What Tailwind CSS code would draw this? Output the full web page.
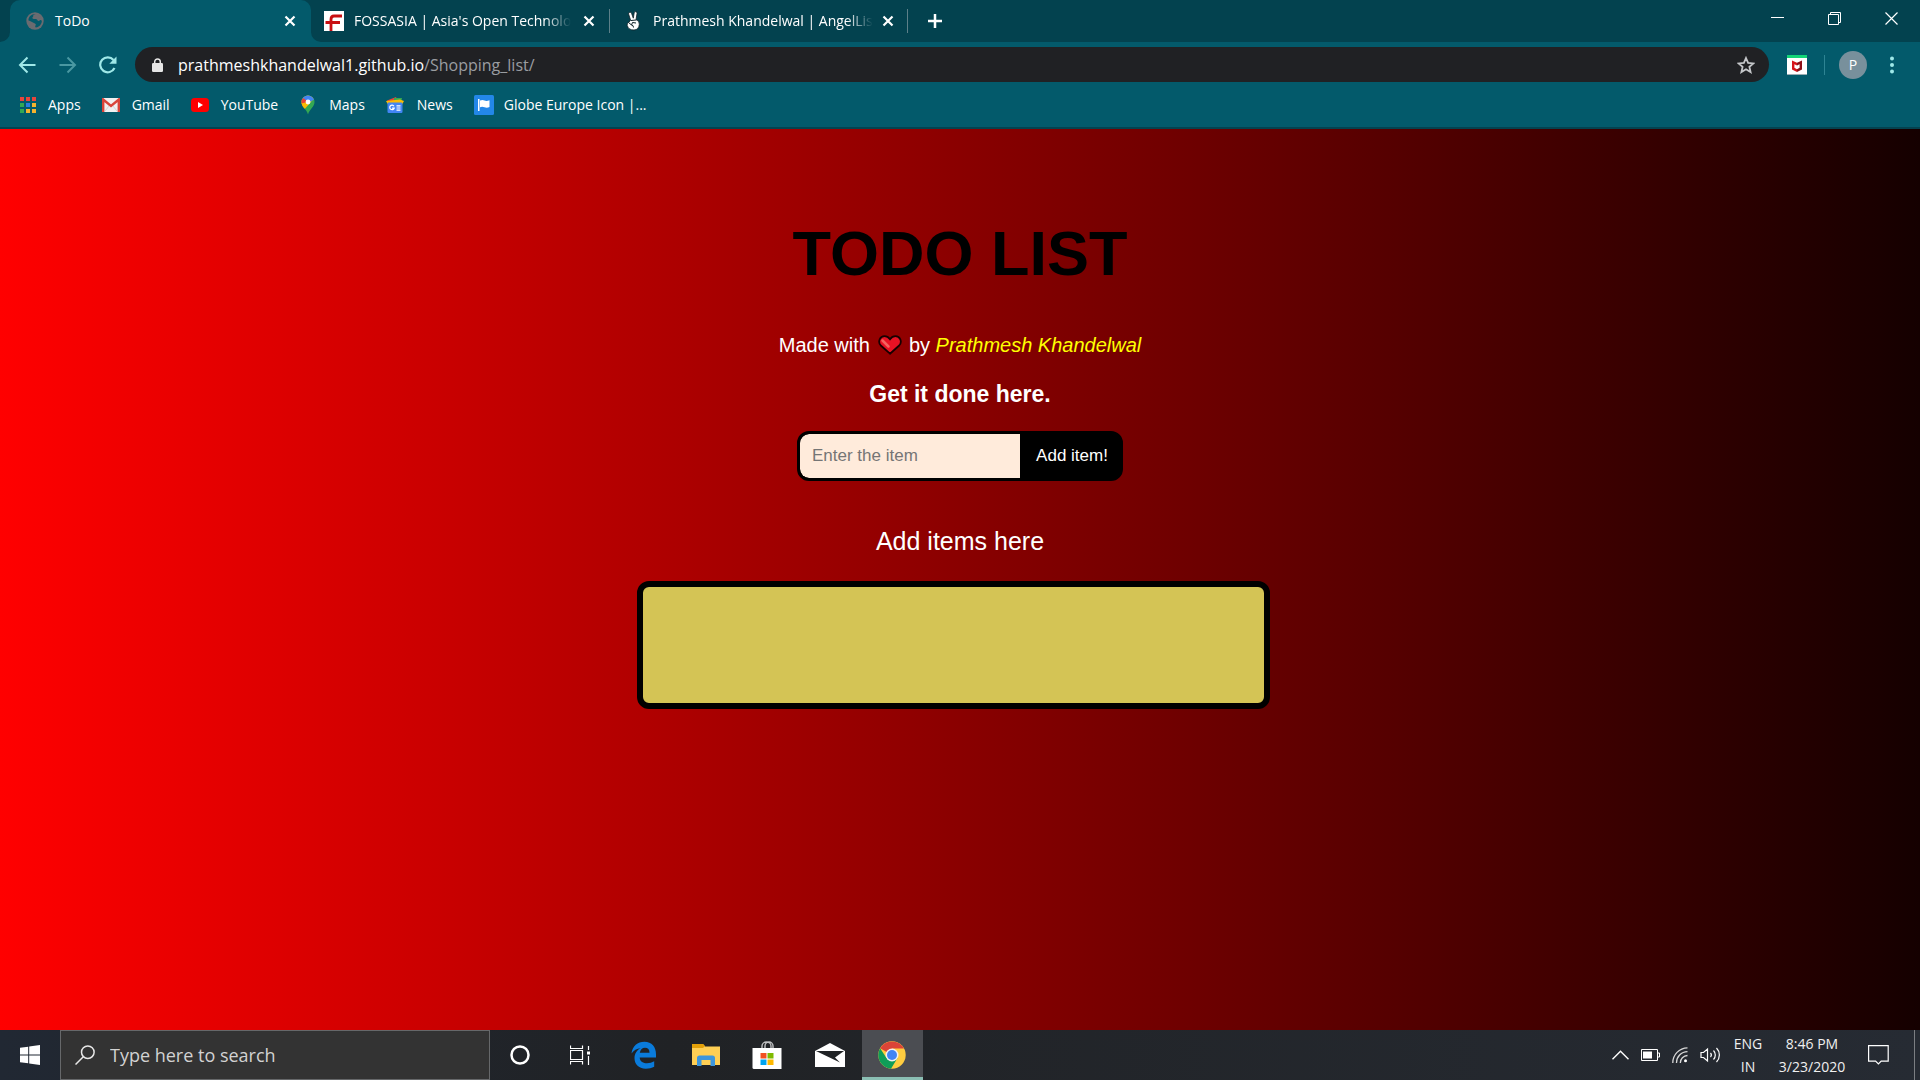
<!DOCTYPE html>
<html lang="en">
<head>
<meta charset="utf-8">
<title>ToDo</title>
<script src="https://cdn.jsdelivr.net/npm/@tailwindcss/browser@4"></script>
</head>
<body class="flex h-screen flex-col overflow-hidden bg-black font-['Segoe_UI','Open_Sans',sans-serif] text-white">

<!-- Browser chrome -->
<header class="shrink-0 border-b-2 border-[#04424f] bg-[#035a6b]">
  <div class="flex h-[42px] bg-[#03424f] pl-[10px] text-sm">
    <div class="relative flex w-[301px] items-center rounded-t-[10px] bg-[#035a6b] pr-[15px] pl-4">
      <svg class="absolute bottom-0 -left-[10px] size-[10px]" viewBox="0 0 10 10"><path d="M10 0v10H0A10 10 0 0 0 10 0z" fill="#035a6b"/></svg>
      <svg class="absolute -right-[10px] bottom-0 size-[10px]" viewBox="0 0 10 10"><path d="M0 0v10h10A10 10 0 0 1 0 0z" fill="#035a6b"/></svg>
      <svg class="size-[18px]" viewBox="0 0 18 18"><circle cx="9" cy="9" r="8.7" fill="#6a6b70"/><path d="M9.500 2c-1.500.5-2.500 1-2.300 2.300.1.900-1 .7-.8 1.800.2 1.200 2.300.8 3.600 1 1.600.2 1.200 1.900 2.600 1.900 1 0 .8-1.200 2-1.100.9.100 1.300.5 1.200 1.600-.4 3.500-3.200 5.500-5.800 6.100-.8-.4-1-1.200-.5-2 .6-.9.200-1.500-.5-2-.8-.6-2.200-.9-3.500-1.800-1-.7-2-1.300-3-1.300C2 5.300 5.500 1.800 9.500 2z" fill="#035a6b"/><path d="M9.500 2.500c1 1.200-.5 1.500.3 2.500s3 .3 4 1.500l1-1C13.600 3.500 11.700 2.400 9.500 2.500z" fill="#6a6b70"/></svg>
      <span class="ml-[11px] flex-1">ToDo</span>
      <button aria-label="Close tab"><svg class="size-3" viewBox="0 0 12 12" stroke="#fff" stroke-width="2.200"><path d="M1.500 1.500l9 9M10.500 1.500l-9 9"/></svg></button>
    </div>
    <div class="flex w-[298px] items-center pr-[14px] pl-[13px]">
      <svg class="size-5 shrink-0" viewBox="0 0 20 20"><path d="M0 0h20v20H0z" fill="#fff"/><path d="M18 5H10Q7 5 7 8.500V20M1.500 11.500H16" fill="none" stroke="#c80f12" stroke-width="2.800"/></svg>
      <span class="ml-[10px] mask-r-from-88% whitespace-nowrap">FOSSASIA | Asia's Open Technolo</span>
      <button class="ml-auto" aria-label="Close tab"><svg class="size-3" viewBox="0 0 12 12" stroke="#fff" stroke-width="2.200"><path d="M1.500 1.500l9 9M10.500 1.500l-9 9"/></svg></button>
    </div>
    <div class="my-[9px] w-px bg-[#5d8089]"></div>
    <div class="flex w-[297px] items-center pr-[13px] pl-4">
      <svg class="h-5 w-4 shrink-0" viewBox="0 0 16 20"><path d="M3.500 1.500q1.500-.8 2 .7l1.800 5 .9-5.400q.4-1.500 1.700-1.100 1.500.3 1.100 1.900L10 8.700q3.500.8 3.300 4.500-.4 5.600-5.300 5.800-5.300.2-6.800-4.600-.5-1.800 1.200-2.600l2.200-2.600L2.600 3q-.4-1.200.9-1.500z" fill="#fff" stroke="#102127" stroke-width=".8"/><path d="M2.500 11.500l3 2.500 1-2.500 3.500.5M5 9.500l5-.5M5.500 14q2 0 2 2.500" fill="none" stroke="#102127"/></svg>
      <span class="ml-[11px] mask-r-from-88% whitespace-nowrap">Prathmesh Khandelwal | AngelLis</span>
      <button class="ml-auto" aria-label="Close tab"><svg class="size-3" viewBox="0 0 12 12" stroke="#fff" stroke-width="2.200"><path d="M1.500 1.500l9 9M10.500 1.500l-9 9"/></svg></button>
    </div>
    <div class="my-[9px] w-px bg-[#5d8089]"></div>
    <button class="ml-[19px]" aria-label="New tab"><svg class="size-4" viewBox="0 0 16 16" stroke="#fff" stroke-width="2.500"><path d="M8 1v14M1 8h14"/></svg></button>
    <div class="mr-[22px] mb-[5px] ml-auto flex items-center gap-11">
      <button aria-label="Minimize"><svg class="size-[13px]" viewBox="0 0 13 13"><path d="M0 5h13v1H0z" fill="#fff"/></svg></button>
      <button aria-label="Restore"><svg class="size-[13px]" viewBox="0 0 13 13" fill="none" stroke="#fff"><path d="M.5 2.500h10v10H.5zM2.500 2.500v-2h10v10h-2"/></svg></button>
      <button aria-label="Close"><svg class="size-[13px]" viewBox="0 0 13 13" stroke="#fff" stroke-width="1.200"><path d="M.5.5l12 12M12.500.5l-12 12"/></svg></button>
    </div>
  </div>

  <div class="flex h-[45px] items-center pr-[26px] pl-[18px]">
    <button aria-label="Back"><svg class="size-[18px]" viewBox="0 0 18 18" fill="none" stroke="#9fe8e8" stroke-width="2"><path d="M17.500 9H2M9.500 1.500L2 9l7.500 7.500"/></svg></button>
    <button class="ml-[23px]" aria-label="Forward"><svg class="size-[18px]" viewBox="0 0 18 18" fill="none" stroke="#4a98a2" stroke-width="2"><path d="M.5 9H16M8.500 1.500L16 9l-7.500 7.500"/></svg></button>
    <button class="ml-[22px]" aria-label="Reload"><svg class="size-[18px]" viewBox="0 0 18 18"><path d="M15.500 12A7.500 7.500 0 1 1 14.500 4" fill="none" stroke="#9fe8e8" stroke-width="2.200"/><path d="M17.500.5v7.200h-7.200z" fill="#9fe8e8"/></svg></button>
    <div class="ml-[18px] flex h-[35px] flex-1 items-center rounded-full bg-[#202124] pr-[14px] pl-[17px]">
      <svg class="h-[14px] w-[11px]" viewBox="0 0 11 14"><path d="M2.700 6V3.800a2.800 2.800 0 0 1 5.600 0V6" fill="none" stroke="#e6e6e6" stroke-width="1.500"/><rect y="5" width="11" height="9" rx="1.200" fill="#e6e6e6"/></svg>
      <a href="#" class="ml-[15px] flex-1 text-base leading-6">prathmeshkhandelwal1.github.io<span class="text-[#9a9da1]">/Shopping_list/</span></a>
      <button aria-label="Bookmark this page"><svg class="size-[18px]" viewBox="0 0 18 18" fill="none" stroke="#c4c6c9" stroke-width="1.800"><path d="M9 2l2.100 4.900 5.300.5-4 3.500 1.200 5.200L9 13.300l-4.600 2.800 1.200-5.200-4-3.500 5.300-.5z"/></svg></button>
    </div>
    <button class="ml-[18px]" aria-label="McAfee"><svg class="size-5" viewBox="0 0 20 20"><path d="M0 0h20v20H0z" fill="#fff"/><path d="M0 0h20v3H0z" fill="#12d477"/><path d="M0 19h20v1H0z" fill="#9badb3"/><path d="M5 5.500l5 2.300v2.800L7.400 9.200v3.600L10 14.200V17l-5-2.500z" fill="#d6141b"/><path d="M15 5.500l-5 2.300v2.800l2.600-1.400v3.600L10 14.200V17l5-2.500z" fill="#8c1018"/></svg></button>
    <div class="ml-[17px] h-5 w-px bg-[#2e8493]"></div>
    <button class="ml-[14px] size-7 rounded-full bg-[#78909c] text-sm" aria-label="Profile">P</button>
    <button class="ml-[23px]" aria-label="Menu"><svg class="h-[18px] w-1" viewBox="0 0 4 18" fill="#9fe8e8"><circle cx="2" cy="2.500" r="2"/><circle cx="2" cy="9" r="2"/><circle cx="2" cy="15.500" r="2"/></svg></button>
  </div>

  <nav class="flex h-10 items-center gap-[21px] px-5 pb-1 text-sm whitespace-nowrap">
    <a href="#" class="flex items-center gap-3"><svg class="size-4" viewBox="0 0 16 16"><path d="M0 0h4v4H0zM6 0h4v4H6zM12 0h4v4h-4z" fill="#e8453c"/><path d="M0 6h4v4H0zM0 12h4v4H0z" fill="#34a853"/><path d="M6 6h4v4H6z" fill="#2a7de1"/><path d="M12 6h4v4h-4zM12 12h4v4h-4zM6 12h4v4H6z" fill="#f5b32e"/></svg>Apps</a>
    <a href="#" class="flex items-center gap-3"><svg class="h-[14px] w-[18px]" viewBox="0 0 18 14"><rect width="18" height="14" rx="1.500" fill="#f1f1f1"/><path d="M1.200 14V1.500L9 8l7.800-6.500V14" fill="none" stroke="#d9453a" stroke-width="2.400"/><path d="M3 13l4-5M15 13l-4-5" stroke="#d5d5d5"/></svg>Gmail</a>
    <a href="#" class="flex items-center gap-3"><svg class="h-[14px] w-[18px]" viewBox="0 0 18 14"><rect width="18" height="14" rx="3.500" fill="#f00"/><path d="M7 4l5 3-5 3z" fill="#fff"/></svg>YouTube</a>
    <a href="#" class="flex items-center gap-3"><svg class="h-5 w-[18px]" viewBox="0 0 18 20"><defs><clipPath id="pin"><path d="M9 .5a6.500 6.500 0 0 1 6.500 6.600c0 5-5 7-6.500 12.400C7.500 14.100 2.500 12 2.500 7.100A6.500 6.500 0 0 1 9 .5z"/></clipPath></defs><g clip-path="url(#pin)"><path d="M0 0h18v20H0z" fill="#34a853"/><path d="M0 0h18L4 16H0z" fill="#fbbc04"/><path d="M0 0h18v3L9 8 0 4z" fill="#4285f4"/><path d="M0 3.500h5L9 7 4 12H0z" fill="#ea4335"/><path d="M0 9l9-2-6 9z" fill="#fbbc04"/></g><circle cx="9" cy="7" r="2.400" fill="#fff"/></svg>Maps</a>
    <a href="#" class="flex items-center gap-[13px]"><svg class="size-[18px]" viewBox="0 0 18 18"><path d="M1 4.500l9-3.500 3 7H2z" fill="#ea4335"/><path d="M8 2h8l-1 6H8z" fill="#34a853"/><path d="M0 5l14-1.500L18 5l-2 3.500H2z" fill="#fbbc04"/><rect x="1.500" y="6.500" width="15" height="10.500" rx="1.200" fill="#4285f4"/><path d="M8 10.200a2.300 2.300 0 1 0 .2 2H6M10.500 9.800h4M10.500 12h4M10.500 14.200h4" fill="none" stroke="#fff" stroke-width="1.200"/></svg>News</a>
    <a href="#" class="flex items-center gap-[10px]"><svg class="size-5" viewBox="0 0 20 20"><rect width="20" height="20" rx="1.500" fill="#2387e8"/><path d="M4 4h1.500v12H4zM6 5.500q2.500-1 4.500 0t5-.3V12q-2.500 1.300-5 .3t-4.500 0z" fill="#fff"/></svg>Globe Europe Icon |...</a>
  </nav>
</header>

<!-- To-do page -->
<main class="flex min-h-0 flex-1 flex-col items-center bg-linear-[to_right,#ff0000,#150000] pt-[88px] font-['Liberation_Sans',Arial,sans-serif]">
  <h1 class="text-[63px] leading-[72px] font-bold text-black">TODO LIST</h1>
  <p class="mt-11 flex items-center text-xl leading-6">Made with
    <svg class="mr-[7px] ml-2 h-5 w-6" viewBox="0 0 24 20" role="img" aria-label="love"><path d="M12 18.700L2.800 10.500C-.8 6.500 2.200 1.200 6.500 1.200c2.500 0 4.300 1.300 5.500 3 1.200-1.700 3-3 5.500-3 4.300 0 7.300 5.300 3.700 9.300z" fill="#e81224" stroke="#180000" stroke-width="1.800"/><path d="M4.500 5.500l6 6" stroke="#f4635f" stroke-width="2.500" stroke-linecap="round"/></svg>
    by&nbsp;<em class="text-[#ffff00]">Prathmesh Khandelwal</em></p>
  <h2 class="mt-[23px] text-[23px] leading-7 font-bold">Get it done here.</h2>
  <form class="mt-[23px] flex h-[50px] overflow-hidden rounded-xl border-[3px] border-black bg-black text-[17px]">
    <input type="text" aria-label="Item" placeholder="Enter the item" class="w-[220px] rounded-l-[9px] bg-[#ffebdb] px-3 outline-none placeholder:text-[#757575]">
    <button type="button" class="w-[100px] pl-1">Add item!</button>
  </form>
  <p class="mt-[46px] text-[25px] leading-7">Add items here</p>
  <ul class="mt-[26px] mr-[13px] h-32 w-[33%] rounded-xl border-6 border-black bg-[#d4c455]"></ul>
</main>

<!-- Windows taskbar -->
<footer class="flex h-[50px] shrink-0 bg-linear-to-r from-[#212833] via-[#202225] via-35% to-[#262b33]">
  <button class="flex w-[60px] items-center justify-center" aria-label="Start"><svg class="size-5" viewBox="0 0 20 20" fill="#fff"><path d="M0 2.800L8.200 1.700V9.400H0zM9.200 1.500L20 0v9.400H9.200zM0 10.400h8.200v7.800L0 17.200zM9.200 10.400H20V20L9.200 18.400z"/></svg></button>
  <label class="flex w-[430px] items-center gap-[15px] border border-[#66686a] bg-[#333] pl-[14px]">
    <svg class="size-5" viewBox="0 0 20 20" fill="none" stroke="#e8e8e8" stroke-width="1.500"><circle cx="12.800" cy="7.200" r="6.300"/><path d="M8.300 11.700L.5 19.500"/></svg>
    <input type="text" aria-label="Search" placeholder="Type here to search" class="min-w-0 flex-1 bg-transparent text-lg outline-none placeholder:text-[#d2d2d2]">
  </label>
  <div class="flex">
    <button class="flex w-[60px] items-center justify-center" aria-label="Cortana"><svg class="size-5" viewBox="0 0 20 20"><circle cx="10" cy="10" r="8.500" fill="none" stroke="#fff" stroke-width="2.500"/></svg></button>
    <button class="flex w-[60px] items-center justify-center" aria-label="Task view"><svg class="size-5" viewBox="0 0 20 20" fill="none" stroke="#fff"><path d="M.5 5.500h12v9H.5zM.5.5v3h12v-3M.5 19.500v-3h12v3M18.500 1v4M18.500 11v9" stroke-width="1.200"/><path d="M17 6.500h3v3h-3z" fill="#fff" stroke="none"/></svg></button>
    <button class="flex w-[68px] items-center justify-center" aria-label="Edge"><svg class="h-7 w-[26px]" viewBox="0 0 26 28"><path d="M.5 12.500C1.500 5 6.500.8 13.400.8c7.500 0 11.600 5.200 11.600 12.400v3.200H8.700c.2 4.300 3.800 5.800 7.300 5.800 2.800 0 5-.7 7.200-2v5.600c-2.400 1.300-5.200 1.900-8.300 1.900C7.300 27.700 3.500 23 3.500 17.300c0-4.700 2.300-8.300 6.400-10.300C5.800 7.500 2.500 9.500.5 12.500zM8.800 11.700h9.700c0-3-1.500-4.900-4.500-4.900-2.700 0-4.700 2-5.200 4.900z" fill="#0a7bdb"/></svg></button>
    <button class="flex w-[56px] items-center justify-center" aria-label="File Explorer"><svg class="h-6 w-7" viewBox="0 0 28 24"><path d="M0 1h11l2 2.500h15V22H0z" fill="#ffcf54"/><path d="M0 1h11l2 2-2 2H0z" fill="#e3a008"/><path d="M5 23V15q0-2.500 2.500-2.500h13Q23 12.500 23 15v8h-4.500v-6h-9v6z" fill="#3d96dc"/></svg></button>
    <button class="flex w-[66px] items-center justify-center" aria-label="Store"><svg class="h-7 w-[30px]" viewBox="0 0 30 28"><path d="M10 8V5a4.500 4 0 0 1 9 0v3M13 7V5a4 4 0 0 1 8 0v3" fill="none" stroke="#bfc0c2" stroke-width="1.400"/><path d="M.5 7h29v21H2Q.5 28 .5 26.500z" fill="#fff"/><path d="M8.500 12h6v5.500h-6z" fill="#f25022"/><path d="M15.500 12h6v5.500h-6z" fill="#7fba00"/><path d="M8.500 18.500h6V24h-6z" fill="#00a4ef"/><path d="M15.500 18.500h6V24h-6z" fill="#ffb900"/></svg></button>
    <button class="flex w-[60px] items-center justify-center" aria-label="Mail"><svg class="h-6 w-[30px]" viewBox="0 0 30 24"><path d="M0 8L15 0l15 8v16H0z" fill="#fff"/><path d="M1 8h28l-9 6.500 5 5L1 8z" fill="#1f2225"/></svg></button>
    <button class="ml-0.5 flex w-[61px] items-center justify-center bg-[#4b4d52] pr-0.5 shadow-[inset_0_-3px_#8bbfb4]" aria-label="Chrome"><svg class="size-7" viewBox="0 0 28 28"><circle cx="14" cy="14" r="13.700" fill="#ffcd40"/><path d="M14 14L2.100 7.200A13.700 13.700 0 0 1 25.900 7.500H14z" fill="#db4437"/><path d="M2.100 7.200A13.700 13.700 0 0 0 13 27.700L19.500 17 8.500 17z" fill="#0f9d58"/><circle cx="14" cy="14" r="6.500" fill="#f1f1f1"/><circle cx="14" cy="14" r="5" fill="#4285f4"/></svg></button>
  </div>
  <div class="ml-auto flex items-center text-center text-sm leading-[23px] text-[#f0f0f0]">
    <button aria-label="Show hidden icons"><svg class="h-[10px] w-[17px]" viewBox="0 0 17 10" fill="none" stroke="#fff" stroke-width="1.400"><path d="M.5 9.200l8-8 8 8"/></svg></button>
    <svg class="ml-3 h-3 w-[19px]" viewBox="0 0 19 12"><path d="M.5.5h16v11H.5zM17 4h1.500v4H17" fill="none" stroke="#fff"/><path d="M2 2.500h9v7H2z" fill="#fff"/></svg>
    <svg class="ml-3 size-4" viewBox="0 0 16 16" fill="none" stroke="#d8d8d8" stroke-width="1.300"><path d="M.8 16A15 15 0 0 1 15.500.8M4.500 16A11 11 0 0 1 15.500 4.700M8.300 16a7.500 7.500 0 0 1 7.200-7.500"/><circle cx="13.500" cy="13.700" r="1.500" fill="#fff" stroke="none"/></svg>
    <svg class="ml-3 h-[18px] w-[21px]" viewBox="0 0 21 18" fill="none" stroke="#fff" stroke-width="1.200"><path d="M1 6.500h2.500L7.500 3v12l-4-3.500H1zM10.500 7a3 3 0 0 1 0 4M13.500 4.500a6.500 6.500 0 0 1 0 9M16.500 2a10 10 0 0 1 0 14"/></svg>
    <div class="ml-[11px] w-8">ENG<br>IN</div>
    <div class="ml-[10px] w-[76px]">8:46 PM<br>3/23/2020</div>
    <button class="ml-[18px]" aria-label="Notifications"><svg class="h-5 w-[21px]" viewBox="0 0 21 20" fill="none" stroke="#fff" stroke-width="1.200"><path d="M.6.6h19.600v15.500h-7L10.400 19l-2.800-2.900h-7z"/></svg></button>
    <div class="mr-[5px] ml-[25px] w-px self-stretch bg-[#7b7e82]"></div>
  </div>
</footer>
</body>
</html>
